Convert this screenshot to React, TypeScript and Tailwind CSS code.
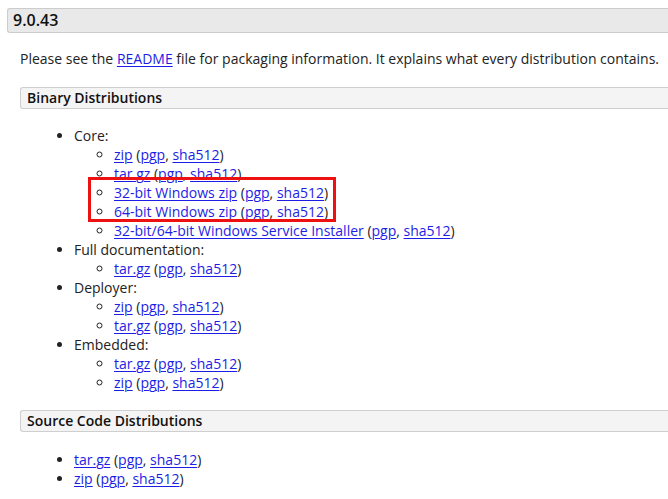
const FONT = "font-['Open_Sans',_'Liberation_Sans',_sans-serif]"

type Dl = { label: string; pgp?: boolean }

function Link({ children }: { children: React.ReactNode }) {
  return <a href="#" className="text-[#1d1de6] underline underline-offset-[2px] decoration-1">{children}</a>
}

function DlLine({ label }: Dl) {
  return (
    <>
      <Link>{label}</Link> (<Link>pgp</Link>, <Link>sha512</Link>)
    </>
  )
}

function Section({ title }: { title: string }) {
  return (
    <div className="h-[22px] rounded-l-[3px] border border-r-0 border-[#cfcfcf] bg-[#f4f4f4] pl-[6px] text-[14px] font-semibold leading-[20px] text-[#111]">
      {title}
    </div>
  )
}

function Sub({ items }: { items: string[] }) {
  return (
    <ul className="list-[circle] pl-[40px]">
      {items.map((it, i) => (
        <li key={i}>
          <DlLine label={it} />
        </li>
      ))}
    </ul>
  )
}

export default function App() {
  return (
    <div className={`${FONT} min-h-[499px] bg-white pl-[7px] pt-[8px] text-[14px] leading-[19px] text-[#222]`}>
      <h3 className="h-[25px] rounded-l-[3px] border border-r-0 border-[#cccccc] bg-[#e9e9e9] pl-[5px] text-[16px] font-semibold leading-[23px] text-[#111]">
        9.0.43
      </h3>
      <div className="pl-[13px]">
        <p className="mt-[16px]">
          Please see the <Link>README</Link> file for packaging information. It explains what every distribution contains.
        </p>
        <div className="mt-[19px]">
          <Section title="Binary Distributions" />
        </div>
        <ul className="mt-[17px] list-disc pl-[54px]">
          <li>
            Core:
            <ul className="list-[circle] pl-[40px]">
              <li>
                <DlLine label="zip" />
              </li>
              <li>
                <DlLine label="tar.gz" />
              </li>
              <li className="relative">
                <span className="pointer-events-none absolute left-[-26px] top-[-6px] h-[45px] w-[248px] border-[3px] border-[#ee1111]" />
                <DlLine label="32-bit Windows zip" />
              </li>
              <li>
                <DlLine label="64-bit Windows zip" />
              </li>
              <li>
                <DlLine label="32-bit/64-bit Windows Service Installer" />
              </li>
            </ul>
          </li>
          <li>
            Full documentation:
            <Sub items={['tar.gz']} />
          </li>
          <li>
            Deployer:
            <Sub items={['zip', 'tar.gz']} />
          </li>
          <li>
            Embedded:
            <Sub items={['tar.gz', 'zip']} />
          </li>
        </ul>
        <div className="mt-[18px]">
          <Section title="Source Code Distributions" />
        </div>
        <ul className="mt-[18px] list-disc pl-[54px]">
          <li>
            <DlLine label="tar.gz" />
          </li>
          <li>
            <DlLine label="zip" />
          </li>
        </ul>
      </div>
    </div>
  )
}
